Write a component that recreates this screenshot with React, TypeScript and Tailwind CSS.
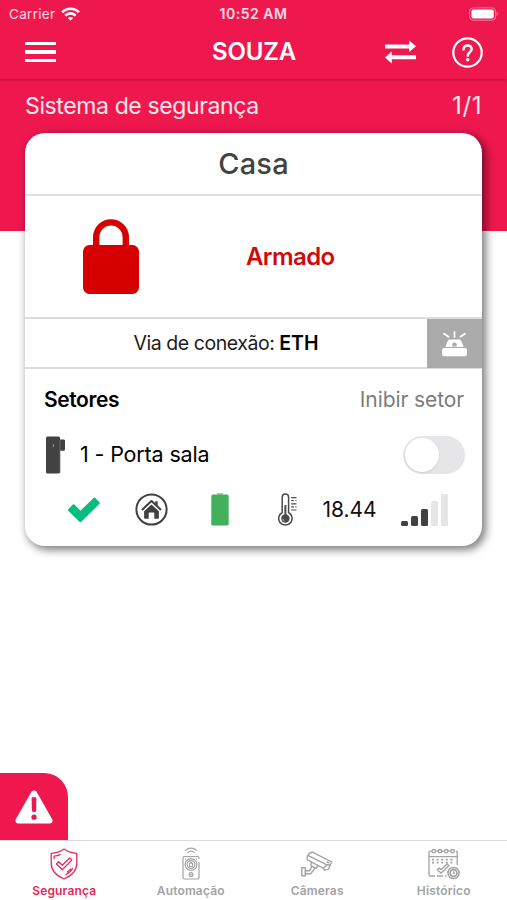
import type { ReactNode } from "react";

function StatusBar() {
  return (
    <div className="grid h-7 grid-cols-3 items-center px-[9px] text-[13px] leading-4 text-white/85">
      <div className="-mt-px flex items-center gap-[6px]">
        <span className="text-[13.5px] tracking-[0.3px]">Carrier</span>
        <svg width="19" height="14" viewBox="0 0 19 14" fill="none" stroke="#fff" strokeWidth="2.7">
          <path d="M1.2 5.2C5.6.6 13.4.6 17.8 5.2" />
          <path d="M4.3 8.6c2.9-2.9 7.5-2.9 10.4 0" />
          <path d="M6.9 11 9.5 13.8 12.1 11c-1.4-1.4-3.8-1.4-5.2 0Z" fill="#fff" stroke="none" />
        </svg>
      </div>
      <span className="text-center text-[14px] font-semibold tracking-[0.5px] whitespace-nowrap">10:52 AM</span>
      <svg className="-mt-px justify-self-end" width="30" height="14" viewBox="0 0 30 14">
        <rect x="1.6" y=".8" width="26" height="12.4" rx="3.6" fill="none" stroke="#fff" strokeOpacity=".45" />
        <rect x="3.4" y="2.6" width="22.4" height="8.8" rx="2" fill="#fff" />
        <path d="M28.6 4.8c1.4.6 1.4 3.8 0 4.4Z" fill="#fff" fillOpacity=".5" />
      </svg>
    </div>
  );
}

function NavBar() {
  return (
    <div className="grid h-[51px] grid-cols-3 items-center pr-[24px] pb-[3px] pl-[25px] text-white">
      <button aria-label="Menu" className="flex w-[31px] flex-col gap-[5px]">
        <span className="h-[3.6px] bg-white" />
        <span className="h-[3.6px] bg-white" />
        <span className="h-[3.6px] bg-white" />
      </button>
      <h1 className="text-center text-[24px] leading-7 font-semibold tracking-[-0.2px]">SOUZA</h1>
      <div className="flex items-center justify-end gap-9">
        <svg width="31" height="24" viewBox="0 0 31 24" fill="#fff">
          <path d="M0 4.4h24.2V.6L31 6.3 24.2 12V8.5H0Z" />
          <path d="M31 15.2H6.8v-3.6L0 17.500l6.800 5.900v-4.100H31Z" />
        </svg>
        <svg width="31" height="31" viewBox="0 0 31 31" fill="none" stroke="#fff">
          <circle cx="15.500" cy="15.500" r="14.200" strokeWidth="2.200" />
          <path d="M11.500 12.500c0-5.400 8.200-5.300 8.200-.4 0 3.100-4 3.200-4 6.600" strokeWidth="2.500" strokeLinecap="round" />
          <circle cx="15.700" cy="22.800" r="1.800" fill="#fff" stroke="none" />
        </svg>
      </div>
    </div>
  );
}

function SirenIcon() {
  return (
    <svg width="27" height="26" viewBox="0 0 27 26" fill="none">
      <path d="M13.500 1v5M3 2.800l4.600 3M24 2.800l-4.600 3" stroke="#fff" strokeWidth="1.800" strokeLinecap="round" />
      <path d="M4.300 16 6.800 10c.4-1 1-1.500 2-1.500h9.400c1 0 1.600.5 2 1.500l2.500 6Z" fill="#fff" />
      <path d="M11.200 15.500v-1.600a2.300 2.300 0 0 1 4.600 0v1.600Z" fill="#aaa" />
      <rect x="1" y="16.900" width="25" height="8.300" rx="2.200" fill="#fff" />
    </svg>
  );
}

function SensorIcon() {
  return (
    <svg width="20" height="38" viewBox="0 0 20 38">
      <rect x="0" y=".5" width="14" height="37" rx="1.600" fill="#424242" />
      <path d="M14 3.500h3.600c.9 0 1.400.6 1.400 1.400v8.400c0 .9-.6 1.500-1.400 1.500H14Z" fill="#424242" />
      <path d="M14 4v33" stroke="#777" strokeWidth=".7" />
      <path d="M7.400 8v3" stroke="#888" strokeWidth="1.200" />
    </svg>
  );
}

function HomeIcon() {
  return (
    <svg width="33" height="33" viewBox="0 0 33 33" fill="none">
      <circle cx="16.500" cy="16.500" r="15.100" stroke="#414141" strokeWidth="2" />
      <path d="M7.500 16.400 16.500 8l9 8.400" stroke="#414141" strokeWidth="2.100" strokeLinecap="round" strokeLinejoin="round" />
      <path d="M20.200 8.200h2.500v5l-2.500-2.300Z" fill="#414141" />
      <path d="m16.500 11.500 7.400 6.800v6.500c0 .6-.3.900-.9.900h-3.700v-5.300c0-.6-.3-.9-.9-.9h-3.800c-.6 0-.9.3-.9.900v5.300H10c-.6 0-.9-.3-.9-.9v-6.500Z" fill="#414141" />
    </svg>
  );
}

function BatteryIcon() {
  return (
    <svg width="18" height="33" viewBox="0 0 18 33">
      <rect x="6" y="0" width="6" height="2.600" rx="1" fill="#b7bdb1" />
      <rect x=".3" y="1.600" width="17.400" height="31" rx="1.600" fill="#43b05c" />
    </svg>
  );
}

function ThermometerIcon() {
  return (
    <svg width="20" height="33" viewBox="0 0 20 33" fill="none" stroke="#4a4a4a">
      <path d="M4.200 19.500V4.200a3.200 3.200 0 0 1 6.400 0v15.300a6.700 6.700 0 1 1-6.400 0Z" strokeWidth="1.500" />
      <path d="M7.400 12v10" strokeWidth="2" />
      <circle cx="7.400" cy="25.500" r="4.200" fill="#4a4a4a" stroke="none" />
      <path d="M4.900 25.800a2.600 2.600 0 0 0 1.700 2.200" stroke="#ccc" strokeWidth=".9" />
      <path d="M13.200 4.700h5.300M13.200 7.500h2.600M13.200 10.800h5.300M13.200 13.800h2.600M13.200 17h5.300M17.500 7.500h1M17.500 13.800h1" strokeWidth="1.200" />
    </svg>
  );
}

function SignalIcon() {
  return (
    <div className="flex h-8 items-end gap-[3px]">
      <span className="h-[5px] w-[7px] rounded-[1.5px] bg-[#424242]" />
      <span className="h-[10px] w-[7px] rounded-[1.5px] bg-[#424242]" />
      <span className="h-[17px] w-[7px] rounded-[1.5px] bg-[#424242]" />
      <span className="h-[25px] w-[7px] rounded-[1.5px] bg-[#e6e6e6]" />
      <span className="h-8 w-[7px] rounded-[1.5px] bg-[#e6e6e6]" />
    </div>
  );
}

function Cell({ className = "w-[68px]", children }: { className?: string; children: ReactNode }) {
  return <div className={`flex shrink-0 items-center justify-center ${className}`}>{children}</div>;
}

function SystemCard() {
  return (
    <section className="relative mx-[25px] -mt-[98px] h-[413px] rounded-[20px] bg-white shadow-[3px_3px_9px_1px_rgba(0,0,0,0.5)]">
      <h2 className="flex h-[63px] items-center justify-center border-b-2 border-[#e0e0e0] text-[29px] font-medium tracking-[0.2px] text-[#424242]">
        Casa
      </h2>

      <div className="flex h-[123px] items-center border-b-2 border-[#dcdcdc]">
        <svg className="ml-[57px]" width="58" height="76" viewBox="0 0 58 76">
          <path d="M14.200 30V18.200a14.800 14.800 0 0 1 29.600 0V30" fill="none" stroke="#d60000" strokeWidth="6.400" />
          <rect x="1" y="26" width="56" height="49" rx="6.500" fill="#d60000" />
        </svg>
        <span className="ml-[106px] text-[24px] font-semibold tracking-[-0.6px] text-[#cf0a0a]">Armado</span>
      </div>

      <div className="flex h-[50px] items-stretch border-b-2 border-[#dcdcdc]">
        <p className="flex flex-1 items-center justify-center gap-[5px] pt-[2px] text-[19.5px] tracking-[-0.45px] text-[#1c1c1c]">
          Via de conexão: <b className="font-semibold tracking-normal text-black">ETH</b>
        </p>
        <button aria-label="Sirene" className="-mb-[1px] flex w-[55px] items-center justify-center bg-[#aaa]">
          <SirenIcon />
        </button>
      </div>

      <div className="flex h-[61px] items-center justify-between pr-[18px] pl-[19px] text-[21px]">
        <h3 className="font-semibold tracking-[-0.4px] text-black">Setores</h3>
        <span className="tracking-[-0.1px] text-[#7c7c7c]">Inibir setor</span>
      </div>

      <div className="flex h-[50px] items-center pr-[17px] pl-[21px]">
        <SensorIcon />
        <span className="-mt-px ml-[14px] text-[21.5px] tracking-[-0.15px] text-black">1 - Porta sala</span>
        <button aria-label="Inibir setor" className="ml-auto flex h-[38px] w-[62px] items-center rounded-full bg-[#e6e6e8] px-[2px]">
          <span className="h-[34px] w-[34px] rounded-full bg-white shadow-[0_1px_2px_rgba(0,0,0,0.12)]" />
        </button>
      </div>

      <div className="flex h-[59px] items-center pl-[24.5px]">
        <Cell>
          <svg width="34" height="26" viewBox="0 0 34 26">
            <path d="m1.500 12 4-4.200c.7-.7 1.400-.7 2.100 0l5.800 5.900L26.300 1.200c.8-.8 1.500-.8 2.200 0l3.800 3.700c.7.700.7 1.400 0 2.100L14.600 24.600c-.8.800-1.600.8-2.400 0L1.500 14c-.7-.7-.7-1.400 0-2Z" fill="#09bb7e" />
          </svg>
        </Cell>
        <Cell><HomeIcon /></Cell>
        <Cell><BatteryIcon /></Cell>
        <Cell><ThermometerIcon /></Cell>
        <Cell className="w-[56px] text-[21px] text-[#111]">18.44</Cell>
        <Cell className="w-[93px]"><SignalIcon /></Cell>
      </div>
    </section>
  );
}

function ShieldIcon() {
  return (
    <svg width="28" height="32" viewBox="0 0 28 32" fill="none" stroke="currentColor" strokeWidth="1.300" strokeLinecap="round" strokeLinejoin="round">
      <path d="M14 1C10.200 3.700 6 5.100 1.200 5.400V15c0 7.500 5 12.700 12.800 16 7.800-3.300 12.800-8.500 12.800-16V5.400C22 5.100 17.800 3.700 14 1Z" />
      <path d="m6.500 16 2.100-2.200 3.700 3.500 7.400-7.300 2.100 2.100-9.500 9.600Z" />
      <path d="M4.200 10.500V8.200c2.300-.2 4.200-.7 6-1.500M16 26.600c2.900-1.500 5.200-3.400 6.500-6M17.500 23.800c1.200-.8 2.200-1.600 3-2.600" />
    </svg>
  );
}

function AutomationIcon() {
  return (
    <svg width="18" height="33" viewBox="0 0 18 33" fill="none" stroke="currentColor" strokeWidth="1.200">
      <path d="M3.500 3.400c3-3 8-3 11 0M5.700 5.700c1.900-1.800 4.700-1.800 6.600 0" strokeLinecap="round" />
      <path d="M17 12v-1a1.500 1.500 0 0 0-1.500-1.500h-13A1.500 1.500 0 0 0 1 11v19.500A1.500 1.500 0 0 0 2.500 32h13a1.500 1.500 0 0 0 1.500-1.500V15" />
      <circle cx="9" cy="17.500" r="5.900" />
      <circle cx="9" cy="17.500" r="3.900" />
      <path d="M7.500 19.500v-2.700L9 15.200l1.500 1.600v2.700Z" />
      <circle cx="9" cy="27.500" r="1.900" />
      <path d="M9 26.800v1.400M3 12.200h1M14 12.200h1" />
    </svg>
  );
}

function CameraIcon() {
  return (
    <svg width="32" height="26" viewBox="0 0 32 26" fill="none" stroke="currentColor" strokeWidth="1.400" strokeLinejoin="round" strokeLinecap="round">
      <path d="M11.500 1.200 30.800 11l-1.600 3-3.300-.2-19-9.400c1-2 2.400-3.400 4.600-3.200Z" />
      <path d="M6.900 4.400 6 7.200c-.3.900 0 1.500.8 1.900l15.700 8.200 3.400-3.500M22.500 17.300l1.100 1.900 4-1.100 1.600-4.100" />
      <path d="m10.400 11-.5 3.700 5.200 2.600 2-2.800M11.200 15.400l-2.700 4.300H4.400v3h5.500l4.300-5.900" />
      <path d="M.8 16.800h3.600v8H.8Z" />
      <path d="m26.200 11 1.600.8" />
    </svg>
  );
}

function HistoryIcon() {
  return (
    <svg width="32" height="32" viewBox="0 0 32 32" fill="none" stroke="currentColor" strokeWidth="1.300">
      <path d="M3.500 3.200H2.200c-.8 0-1.200.4-1.200 1.200v22.400c0 .8.400 1.200 1.200 1.200H7M9 28h6M17 28h1.500M29.200 17V4.400c0-.8-.4-1.200-1.200-1.200M1 8.600h28.200" />
      <circle cx="5.700" cy="3.200" r="1.700" />
      <circle cx="12" cy="3.200" r="1.700" />
      <circle cx="18.300" cy="3.200" r="1.700" />
      <circle cx="24.600" cy="3.200" r="1.700" />
      <path d="M7.400 3.200h2.900M13.700 3.200h2.900M20 3.200h2.900" />
      <path d="M4 11.600h23M4 14.600h23" strokeWidth="1.600" strokeDasharray="2 2.600" />
      <path d="m9.300 21.700 1.700-1.800 2 1.700 6.200-5.600 1.700 1.800-7.900 7.200Z" />
      <circle cx="25.500" cy="25" r="5.600" strokeWidth="1.500" />
      <circle cx="25.500" cy="25" r="3.400" strokeWidth="1.800" />
      <path d="M25.500 23.300V25h1.400" />
    </svg>
  );
}

const tabs = [
  { label: "Segurança", icon: <ShieldIcon />, active: true },
  { label: "Automação", icon: <AutomationIcon />, active: false },
  { label: "Câmeras", icon: <CameraIcon />, active: false },
  { label: "Histórico", icon: <HistoryIcon />, active: false },
];

function TabBar() {
  return (
    <nav className="flex h-[60px] border-t border-[#dcdcdc] bg-white pl-px">
      {tabs.map((tab) => (
        <button
          key={tab.label}
          className={`flex flex-1 flex-col items-center pt-[6px] ${tab.active ? "text-[#e8285c]" : "text-[#a3a3a3]"}`}
        >
          <span className="flex h-[33px] items-center">{tab.icon}</span>
          <span className="mt-[3px] text-[12px] leading-4 font-semibold tracking-[0.15px]">{tab.label}</span>
        </button>
      ))}
    </nav>
  );
}

export default function App() {
  return (
    <div className="flex h-[900px] w-[507px] flex-col overflow-hidden bg-white font-['Inter','Liberation_Sans',sans-serif]">
      <header className="relative bg-[#ee184f] shadow-[0_1px_3px_rgba(90,0,30,0.4)]">
        <StatusBar />
        <NavBar />
      </header>

      <main className="flex flex-1 flex-col">
        <div className="flex h-[152px] items-start justify-between bg-[#ee184f] px-[25px] pt-[12px] text-[23px] leading-[30px] text-white/90">
          <span className="tracking-[-0.38px]">Sistema de segurança</span>
          <span className="text-[24px] tracking-[0.6px]">1/1</span>
        </div>
        <SystemCard />
        <button aria-label="Alertas" className="mt-auto flex h-[67px] w-[68px] items-center justify-center rounded-tr-[24px] bg-[#ee184f]">
          <svg width="38" height="34" viewBox="0 0 38 34">
            <path d="M16.300 2c1.200-2 4.200-2 5.400 0l15.500 27.300c1.100 1.900-.1 4.200-2.400 4.200H3.200C.9 33.500-.3 31.200.8 29.300Z" fill="#fff" />
            <path d="M16.600 8.500c0-.8.500-1.300 1.300-1.300h2.200c.8 0 1.300.5 1.300 1.300l-.3 12.200c0 .8-.5 1.200-1.200 1.200h-1.800c-.7 0-1.200-.4-1.200-1.200Z" fill="#ee184f" />
            <circle cx="19" cy="27.200" r="2.600" fill="#ee184f" />
          </svg>
        </button>
      </main>

      <TabBar />
    </div>
  );
}
